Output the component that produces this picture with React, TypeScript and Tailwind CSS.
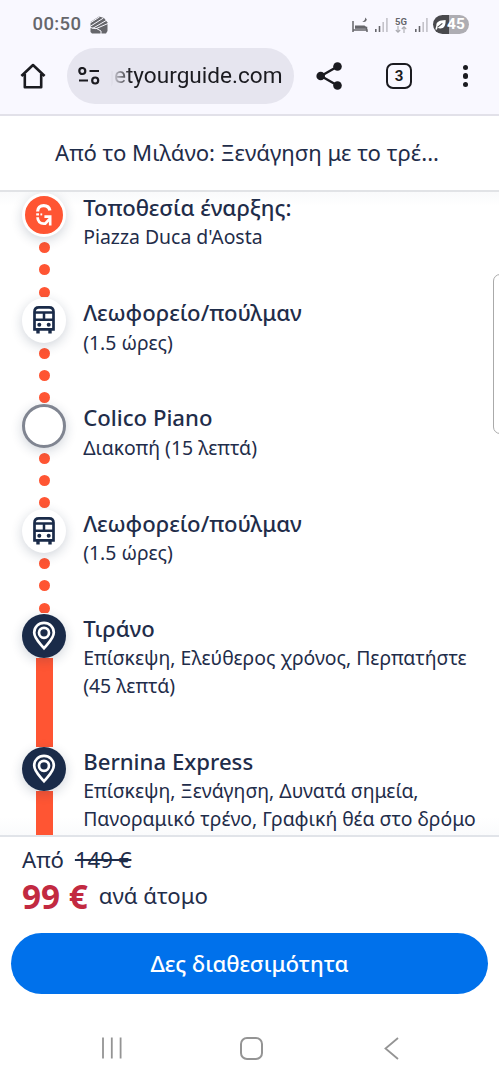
import type { ReactNode } from 'react'

type Kind = 'start' | 'bus' | 'stop' | 'place'

interface Stop {
  kind: Kind
  title: string
  lines: string[]
  line: 'dotted' | 'solid'
}

const stops: Stop[] = [
  { kind: 'start', title: 'Τοποθεσία έναρξης:', lines: ["Piazza Duca d'Aosta"], line: 'dotted' },
  { kind: 'bus', title: 'Λεωφορείο/πούλμαν', lines: ['(1.5 ώρες)'], line: 'dotted' },
  { kind: 'stop', title: 'Colico Piano', lines: ['Διακοπή (15 λεπτά)'], line: 'dotted' },
  { kind: 'bus', title: 'Λεωφορείο/πούλμαν', lines: ['(1.5 ώρες)'], line: 'dotted' },
  { kind: 'place', title: 'Τιράνο', lines: ['Επίσκεψη, Ελεύθερος χρόνος, Περπατήστε', '(45 λεπτά)'], line: 'solid' },
  { kind: 'place', title: 'Bernina Express', lines: ['Επίσκεψη, Ξενάγηση, Δυνατά σημεία,', 'Πανοραμικό τρένο, Γραφική θέα στο δρόμο'], line: 'solid' },
]

export default function App() {
  return (
    <div className="relative flex h-[1080px] w-[499px] flex-col overflow-hidden bg-white font-['Noto_Sans',sans-serif] text-[#1f2d4a]">
      <div className="h-[116px] shrink-0 border-b-2 border-[#e2e1e9] bg-[#f9f8ff]">
        <StatusBar />
        <BrowserBar />
      </div>

      <header className="flex h-[76px] shrink-0 items-center border-b-2 border-[#e1e3e6] bg-white pl-[55px]">
        <h1 className="whitespace-nowrap text-[22.15px]">Από το Μιλάνο: Ξενάγηση με το τρέ...</h1>
      </header>

      {/* Itinerary */}
      <main className="h-[643px] shrink-0 overflow-hidden bg-[linear-gradient(#f9fafb,#ffffff_14px,#ffffff_625px,#fafbfc)] pt-px pl-[22px]">
        {stops.map((s, i) => <StopRow key={i} stop={s} />)}
      </main>

      {/* Booking footer */}
      <footer className="h-[181px] shrink-0 border-t-2 border-[#e1e4e9] bg-white px-[11px] pt-[8px]">
        <div className="flex h-[30px] items-center gap-[11px] pl-[11px] text-[22.2px] leading-[30px]">
          <span>Από</span>
          <span className="line-through decoration-2">149 €</span>
        </div>
        <div className="flex h-[42px] items-center gap-[11px] pl-[11px]">
          <span className="text-[33.3px] leading-[41px] font-bold text-[#c22941]">99 €</span>
          <span className="text-[22.2px]">ανά άτομο</span>
        </div>
        <button className="mt-[16px] flex h-[61px] w-[477px] items-center justify-center rounded-full bg-[#0071eb] text-[22.2px] font-medium text-white">
          Δες διαθεσιμότητα
        </button>
      </footer>

      <NavBar />

      {/* Edge panel handle */}
      <div className="absolute top-[274px] left-[493px] h-[160px] w-[14px] rounded-[7px] border border-[#aaaaaa] bg-white" />
    </div>
  )
}

function StopRow({ stop }: { stop: Stop }) {
  return (
    <div className="flex gap-[16.9px]">
      <div className="flex w-[44.3px] shrink-0 flex-col items-center">
        <Marker kind={stop.kind} />
        {stop.line === 'solid' ? (
          <div className="w-[17px] grow bg-[#ff5533]" />
        ) : (
          <div className="flex h-[60px] flex-col gap-[11.2px] overflow-hidden pt-[5px]">
            <div className="size-[11px] shrink-0 rounded-full bg-[#ff5533]" />
            <div className="size-[11px] shrink-0 rounded-full bg-[#ff5533]" />
            <div className="size-[11px] shrink-0 rounded-full bg-[#ff5533]" />
          </div>
        )}
      </div>
      <div className="-mt-[2.4px] pb-[47.4px]">
        <h2 className="text-[22.15px] leading-[32.6px] font-medium">{stop.title}</h2>
        {stop.lines.map(l => (
          <p key={l} className="text-[19.4px] leading-[27.7px] whitespace-nowrap">{l}</p>
        ))}
      </div>
    </div>
  )
}

function Marker({ kind }: { kind: Kind }) {
  if (kind === 'start') {
    return (
      <Circle className="border-[3px] border-white bg-[#ff5533]">
        <svg width="18" height="24" viewBox="0 0 18 24" fill="none" stroke="#fff" strokeWidth="3.2">
          <path d="M2.6 8.6C2.6 4.8 5.2 2.6 8.7 2.6c3.3 0 5.6 1.8 6.2 4.9" />
          <path d="M2.6 14.2c0 4 2.6 6.4 6.2 6.4h1.4l4.4-4.6" strokeWidth="2.8" />
          <path d="M9.4 13.6h5.8v8.8" strokeWidth="2.6" />
          <path d="M1.2 11.4h2.8" strokeWidth="2.2" />
          <path d="M5.4 11.4h1.8" strokeWidth="2" />
        </svg>
      </Circle>
    )
  }
  if (kind === 'bus') {
    return (
      <Circle className="bg-white">
        <svg width="24" height="30" viewBox="0 0 24 30" fill="none" stroke="#1a2b49" strokeWidth="2.7">
          <path d="M2.5 24.4V6.8c0-2.8 1.6-4.4 4.4-4.4h10.2c2.8 0 4.4 1.6 4.4 4.4v17.6z" />
          <path d="M2.5 7.6h19M2.5 14.8h19M12 7.6v7.2" strokeWidth="2.5" />
          <path d="M6 24.5v4.1M18 24.5v4.1" strokeWidth="3.4" />
          <circle cx="7.3" cy="19.8" r="2" fill="#1a2b49" stroke="none" />
          <circle cx="16.7" cy="19.8" r="2" fill="#1a2b49" stroke="none" />
        </svg>
      </Circle>
    )
  }
  if (kind === 'stop') {
    return <Circle className="border-[3px] border-[#808591] bg-white" />
  }
  return (
    <Circle className="bg-[#1a2b49]">
      <svg width="24" height="30" viewBox="0 0 24 30" fill="none" stroke="#fff" strokeWidth="2.7">
        <path d="M12 27.2C7.5 21.8 2.2 17.7 2.2 11.6a9.8 9.8 0 0 1 19.6 0c0 6.1-5.3 10.2-9.8 15.6z" />
        <circle cx="12" cy="11.8" r="5" />
      </svg>
    </Circle>
  )
}

function Circle({ className, children }: { className: string; children?: ReactNode }) {
  return (
    <div className={`relative z-10 flex size-[44.3px] shrink-0 items-center justify-center rounded-full shadow-[0_3px_12px_rgba(26,43,73,0.2)] ${className}`}>
      {children}
    </div>
  )
}

function StatusBar() {
  return (
    <div className="flex h-[48px] items-center pt-px pl-[32.5px] font-[Roboto,sans-serif] text-[#66666b]">
      <span className="w-[50px] text-[18.5px] font-medium tracking-[0.4px]">00:50</span>
      <svg className="ml-[7.5px]" width="18" height="18" viewBox="0 0 18 18">
        <path d="M.5 6 9 .5 14 2l3.5 4.5V15l-1.5 2.5H2L.5 16z" fill="#66666b" />
        <path d="M0 7 9.5 1M0 10.5 13.5 2M2.5 12.5 17 4M0 11.5l6 1.2L18 7.5M6.5 12.5l4.5 2.5v3" stroke="#f9f8ff" strokeWidth="1" fill="none" />
      </svg>
      <svg className="ml-[243px]" width="18" height="16" viewBox="0 0 18 16" fill="none" stroke="#66666b" strokeWidth="1.5">
        <path d="M2 4v11M2 13h14v2M4 10.5h11.5V13" />
        <path d="M4 8.6h9.5l2 1.6v1.6H4z" fill="#66666b" stroke="none" />
        <path d="M14 .5c.5 2-.4 3.6-2.8 4 2.2 1.2 4.4 0 4.6-2.2z" fill="#66666b" stroke="none" />
      </svg>
      <Signal className="ml-[6px]" />
      <div className="ml-[6px] flex w-[14px] flex-col items-center">
        <span className="text-[9.5px] leading-[9px] font-bold">5G</span>
        <svg width="12" height="7" viewBox="0 0 12 7" fill="none" stroke="#aaaab0" strokeWidth="1.1">
          <path d="M3 0v6M.8 4 3 6.2 5.2 4M9 7V1M6.8 3 9 .8 11.2 3" />
        </svg>
      </div>
      <Signal className="ml-[7px]" />
      <div className="ml-[5px] flex h-[19px] w-[36px] items-center rounded-full bg-[linear-gradient(90deg,#49494d_45%,#aeadb3_45%)] pl-[2px] text-[15.5px] font-bold text-white">
        <svg width="11" height="12" viewBox="0 0 10 11">
          <path d="M1.2 6C1 2.6 4.2 1.2 9.7 1c.2 4.8-1.5 8-5 7.8-1 0-1.7-.4-2.2-.8L1.2 10 .3 9.4z" fill="#fff" />
          <path d="M2.2 7.7 6.7 4" stroke="#49494d" strokeWidth="1" />
        </svg>
        <span className="ml-px">45</span>
      </div>
    </div>
  )
}

function Signal({ className }: { className: string }) {
  return (
    <svg className={className} width="13" height="14" viewBox="0 0 13 14">
      <path d="M0 11h1.6v3H0zM3.7 8h1.6v6H3.7z" fill="#66666b" />
      <path d="M7.4 4H9v10H7.4zM11.1 0h1.6v14h-1.6z" fill="#c3c2c9" />
    </svg>
  )
}

function BrowserBar() {
  return (
    <div className="flex h-[56px] items-center pl-[20px] text-[#1b1b20]">
      <svg width="26" height="26" viewBox="0 0 26 26" fill="none" stroke="#1b1b20" strokeWidth="2.6" strokeLinejoin="round">
        <path d="M1.4 13 13 2l11.6 11M4.8 11v13.2h16.4V11" />
      </svg>
      <div className="ml-[20.5px] flex h-[56px] w-[227px] items-center rounded-full bg-[#e6e5ef] pl-[11px]">
        <svg width="22" height="18" viewBox="0 0 22 18" fill="none" stroke="#1b1b20" strokeWidth="2.2">
          <circle cx="4.3" cy="4" r="3" />
          <path d="M11.5 4H21M1 13.5h9" />
          <circle cx="17.2" cy="13.5" r="3" />
        </svg>
        {/* host is right aligned, its start fades out */}
        <div className="ml-[11px] flex w-[172px] justify-end overflow-hidden [mask-image:linear-gradient(90deg,transparent,black_20px)]">
          <span className="font-[Roboto,sans-serif] text-[22.6px] leading-[34px] whitespace-nowrap">getyourguide.com</span>
        </div>
      </div>
      <svg className="ml-[22.5px]" width="27" height="28" viewBox="0 0 27 28" fill="#1b1b20">
        <path d="M21.5 4.5 5 14l16.5 9.5" fill="none" stroke="#1b1b20" strokeWidth="2.4" />
        <circle cx="21.5" cy="4.5" r="4.3" />
        <circle cx="4.7" cy="14" r="4.3" />
        <circle cx="21.5" cy="23.5" r="4.3" />
      </svg>
      <div className="ml-[43px] flex size-[26px] items-center justify-center rounded-[7px] border-[2.6px] border-[#1b1b20] font-[Roboto,sans-serif] text-[15px] font-bold">
        3
      </div>
      <div className="ml-[50.5px] flex flex-col gap-[3px]">
        <div className="size-[5.5px] rounded-full bg-[#1b1b20]" />
        <div className="size-[5.5px] rounded-full bg-[#1b1b20]" />
        <div className="size-[5.5px] rounded-full bg-[#1b1b20]" />
      </div>
    </div>
  )
}

function NavBar() {
  return (
    <nav className="flex h-[64px] items-center pl-[101px]">
      <svg width="22" height="22" viewBox="0 0 22 22" stroke="#949494" strokeWidth="1.8">
        <path d="M2 .5v21M10.8.5v21M19.6.5v21" />
      </svg>
      <div className="ml-[117px] size-[23px] rounded-[7px] border-2 border-[#949494]" />
      <svg className="ml-[121px]" width="15" height="23" viewBox="0 0 15 23" fill="none" stroke="#949494" strokeWidth="1.8">
        <path d="M14 1 1.5 11.5 14 22" />
      </svg>
    </nav>
  )
}
